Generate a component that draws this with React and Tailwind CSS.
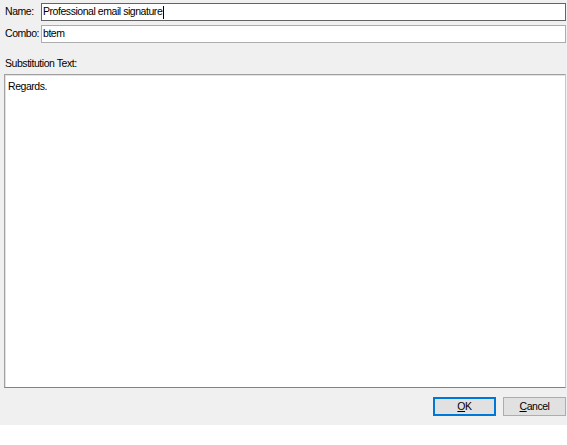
export default function App() {
  const font = { fontFamily: '"Liberation Sans", Arial, sans-serif' };
  return (
    <div className="w-[567px] h-[425px] bg-[#f0f0f0] flex flex-col text-[10.5px] tracking-[-0.45px] text-black" style={font}>
      <div className="flex items-center mt-[3px] h-[18px]">
        <span className="w-[41px] pl-[5px] shrink-0">Name:</span>
        <div className="flex-1 h-[18px] bg-white border border-[#646464] mr-[1px] flex items-center px-[1px]">
          <span>Professional email signature</span>
          <span className="w-px h-[13px] bg-black ml-px"></span>
        </div>
      </div>
      <div className="flex items-center mt-[4px] h-[18px]">
        <span className="w-[41px] pl-[5px] shrink-0">Combo:</span>
        <div className="flex-1 h-[18px] bg-white border border-[#adadad] mr-[1px] flex items-center px-[1px]">
          <span>btem</span>
        </div>
      </div>
      <div className="pl-[5px] mt-[14px] h-[13px] leading-[13px]">Substitution Text:</div>
      <div className="mt-[4px] ml-[4px] mr-[1px] h-[314px] bg-white border border-[#a0a0a0] border-b-[#838383] border-r-[#c8c8c8] shadow-[inset_1px_1px_0_#e3e3e3] px-[3px] pt-[4px]">
        Regards.
      </div>
      <div className="flex justify-end gap-[7px] mt-[9px] mr-[1px]">
        <button className="w-[63px] h-[19px] bg-[#e1e1e1] border border-[#0078d7] shadow-[inset_0_0_0_1px_#0078d7] flex items-center justify-center">
          <span><span className="underline">O</span>K</span>
        </button>
        <button className="w-[63px] h-[19px] bg-[#e1e1e1] border border-[#adadad] flex items-center justify-center">
          <span><span className="underline">C</span>ancel</span>
        </button>
      </div>
    </div>
  );
}
